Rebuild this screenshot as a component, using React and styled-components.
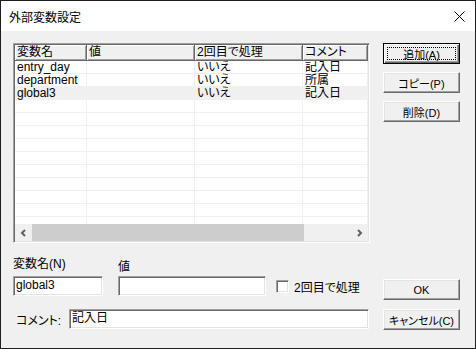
import React from "react";
import styled, { createGlobalStyle, css } from "styled-components";

const ROWS = [
  { name: "entry_day", value: "", twice: "いいえ", comment: "記入日" },
  { name: "department", value: "", twice: "いいえ", comment: "所属" },
  { name: "global3", value: "", twice: "いいえ", comment: "記入日", selected: true },
];

const COLUMNS = [
  { key: "name", label: "変数名", width: 72 },
  { key: "value", label: "値", width: 108 },
  { key: "twice", label: "2回目で処理", width: 108 },
  { key: "comment", label: "コメント" },
];

const EMPTY_ROWS = 10;

const GlobalStyle = createGlobalStyle`
  html, body { margin: 0; padding: 0; background: #fff; }
  body {
    font-family: "Liberation Sans", "Noto Sans CJK JP", sans-serif;
    font-size: 12px;
    font-feature-settings: "palt";
    color: #000;
  }
`;

const sunken = css`
  box-sizing: border-box;
  border-style: solid;
  border-width: 1px;
  border-color: #a0a0a0 #fff #fff #a0a0a0;
  box-shadow: inset 1px 1px #696969, inset -1px -1px #e3e3e3;
  background: #fff;
`;

const Window = styled.div`
  width: 476px;
  height: 349px;
  box-sizing: border-box;
  border: 1px solid #1f1f1f;
  display: flex;
  flex-direction: column;
  background: #f0f0f0;
  overflow: hidden;
`;

const TitleBar = styled.div`
  height: 30px;
  flex: none;
  background: #fff;
  display: flex;
  align-items: center;
  justify-content: space-between;
  padding: 0 10px 0 8px;
  font-family: "Noto Sans CJK JP", sans-serif;
  font-feature-settings: normal;
  font-size: 12px;
`;

const Body = styled.div`
  flex: 1;
  padding: 12px 0 0 12px;
  display: flex;
  flex-direction: column;
`;

const TopSection = styled.div`
  display: flex;
  gap: 13px;
`;

const ListView = styled.div`
  ${sunken};
  width: 357px;
  height: 200px;
  padding: 1px;
  display: flex;
  flex-direction: column;
  overflow: hidden;
`;

const HeaderRow = styled.div`
  display: flex;
  height: 16px;
  flex: none;
`;

const HeaderCell = styled.div`
  box-sizing: border-box;
  ${({ $width }) => ($width ? `width: ${$width}px; flex: none;` : "flex: 1;")}
  background: #f0f0f0;
  border-right: 1px solid #696969;
  border-bottom: 1px solid #696969;
  box-shadow: inset 1px 1px #fff, inset -1px -1px #a0a0a0;
  padding-left: 2px;
  line-height: 15px;
  white-space: nowrap;
  overflow: hidden;
`;

const Rows = styled.div`
  flex: 1;
  overflow: hidden;
  background: #fff;
`;

const Row = styled.div`
  display: flex;
  height: 13px;
  background: ${({ $selected }) => ($selected ? "#f0f0f0" : "#fff")};
`;

const Cell = styled.div`
  box-sizing: border-box;
  ${({ $width }) => ($width ? `width: ${$width}px; flex: none;` : "flex: 1;")}
  border-right: 1px solid #f0f0f0;
  border-bottom: 1px solid #f0f0f0;
  padding-left: 2px;
  line-height: 12px;
  white-space: nowrap;
`;

const ScrollBar = styled.div`
  height: 17px;
  flex: none;
  display: flex;
  background: #f0f0f0;
`;

const ScrollButton = styled.div`
  width: 17px;
  flex: none;
  display: flex;
  align-items: center;
  justify-content: center;
`;

const Thumb = styled.div`
  width: 272px;
  flex: none;
  background: #cdcdcd;
`;

const Track = styled.div`
  flex: 1;
`;

const ButtonColumn = styled.div`
  display: flex;
  flex-direction: column;
  gap: ${({ $gap }) => $gap}px;
  padding-top: ${({ $top }) => $top || 0}px;
`;

const Button = styled.div`
  position: relative;
  box-sizing: border-box;
  width: 77px;
  height: 21px;
  display: flex;
  align-items: center;
  justify-content: center;
  background: #f0f0f0;
  font-size: 11px;
  white-space: nowrap;
  border: 1px solid;
  border-color: #fff #696969 #696969 #fff;
  box-shadow: inset -1px -1px #a0a0a0, inset 1px 1px #e3e3e3;
  ${({ $default }) =>
    $default &&
    css`
      border-color: #000;
      box-shadow: inset 1px 1px #fff, inset -1px -1px #696969, inset -2px -2px #a0a0a0;
      &::after {
        content: "";
        position: absolute;
        inset: 3px;
        border: 1px dotted #000;
      }
    `}
`;

const BottomSection = styled.div`
  display: flex;
  gap: 13px;
`;

const FieldsColumn = styled.div`
  width: 357px;
  display: flex;
  flex-direction: column;
`;

const FieldsRow = styled.div`
  display: flex;
  align-items: flex-end;
  padding-top: 14px;
`;

const Field = styled.div`
  display: flex;
  flex-direction: column;
  width: ${({ $width }) => $width}px;
  margin-right: ${({ $gap }) => $gap}px;
`;

const Label = styled.div`
  line-height: 14px;
  padding-top: ${({ $drop }) => $drop || 0}px;
  margin-bottom: ${({ $below }) => $below}px;
`;

const TextBox = styled.div`
  ${sunken};
  height: 20px;
  width: ${({ $width }) => ($width ? `${$width}px` : "100%")};
  padding: 0 2px;
  line-height: 17px;
  font-size: 12px;
  white-space: nowrap;
`;

const CheckWrap = styled.div`
  height: 20px;
  display: flex;
  align-items: center;
  gap: 5px;
`;

const CheckBox = styled.div`
  ${sunken};
  width: 13px;
  height: 13px;
`;

const CommentRow = styled.div`
  display: flex;
  align-items: center;
  margin-top: 13px;
  padding-left: 3px;
`;

const CommentLabel = styled.div`
  width: 53px;
`;

function Chevron({ dir }) {
  const d = dir === "left" ? "M5 1 L2 4 L5 7" : "M2 1 L5 4 L2 7";
  return (
    <svg width="7" height="8" viewBox="0 0 7 8">
      <path d={d} fill="none" stroke="#606060" strokeWidth="2" />
    </svg>
  );
}

export default function App() {
  return (
    <>
      <GlobalStyle />
      <Window>
        <TitleBar>
          <span>外部変数設定</span>
          <svg width="11" height="11" viewBox="0 0 11 11">
            <path d="M0.5 0.5 L10.5 10.5 M10.5 0.5 L0.5 10.5" stroke="#000" strokeWidth="1" />
          </svg>
        </TitleBar>
        <Body>
          <TopSection>
            <ListView>
              <HeaderRow>
                {COLUMNS.map((c) => (
                  <HeaderCell key={c.key} $width={c.width}>
                    {c.label}
                  </HeaderCell>
                ))}
              </HeaderRow>
              <Rows>
                {ROWS.map((r) => (
                  <Row key={r.name} $selected={r.selected}>
                    {COLUMNS.map((c) => (
                      <Cell key={c.key} $width={c.width}>
                        {r[c.key]}
                      </Cell>
                    ))}
                  </Row>
                ))}
                {Array.from({ length: EMPTY_ROWS }).map((_, i) => (
                  <Row key={i}>
                    {COLUMNS.map((c) => (
                      <Cell key={c.key} $width={c.width} />
                    ))}
                  </Row>
                ))}
              </Rows>
              <ScrollBar>
                <ScrollButton>
                  <Chevron dir="left" />
                </ScrollButton>
                <Thumb />
                <Track />
                <ScrollButton>
                  <Chevron dir="right" />
                </ScrollButton>
              </ScrollBar>
            </ListView>
            <ButtonColumn $gap={8}>
              <Button $default>追加(A)</Button>
              <Button>コピー(P)</Button>
              <Button>削除(D)</Button>
            </ButtonColumn>
          </TopSection>
          <BottomSection>
            <FieldsColumn>
              <FieldsRow>
                <Field $width={90} $gap={15}>
                  <Label $below={5}>変数名(N)</Label>
                  <TextBox>global3</TextBox>
                </Field>
                <Field $width={148} $gap={10}>
                  <Label $drop={3} $below={2}>値</Label>
                  <TextBox />
                </Field>
                <CheckWrap>
                  <CheckBox />
                  <span>2回目で処理</span>
                </CheckWrap>
              </FieldsRow>
              <CommentRow>
                <CommentLabel>コメント:</CommentLabel>
                <TextBox $width={300}>記入日</TextBox>
              </CommentRow>
            </FieldsColumn>
            <ButtonColumn $gap={9} $top={36}>
              <Button>OK</Button>
              <Button>キャンセル(C)</Button>
            </ButtonColumn>
          </BottomSection>
        </Body>
      </Window>
    </>
  );
}
